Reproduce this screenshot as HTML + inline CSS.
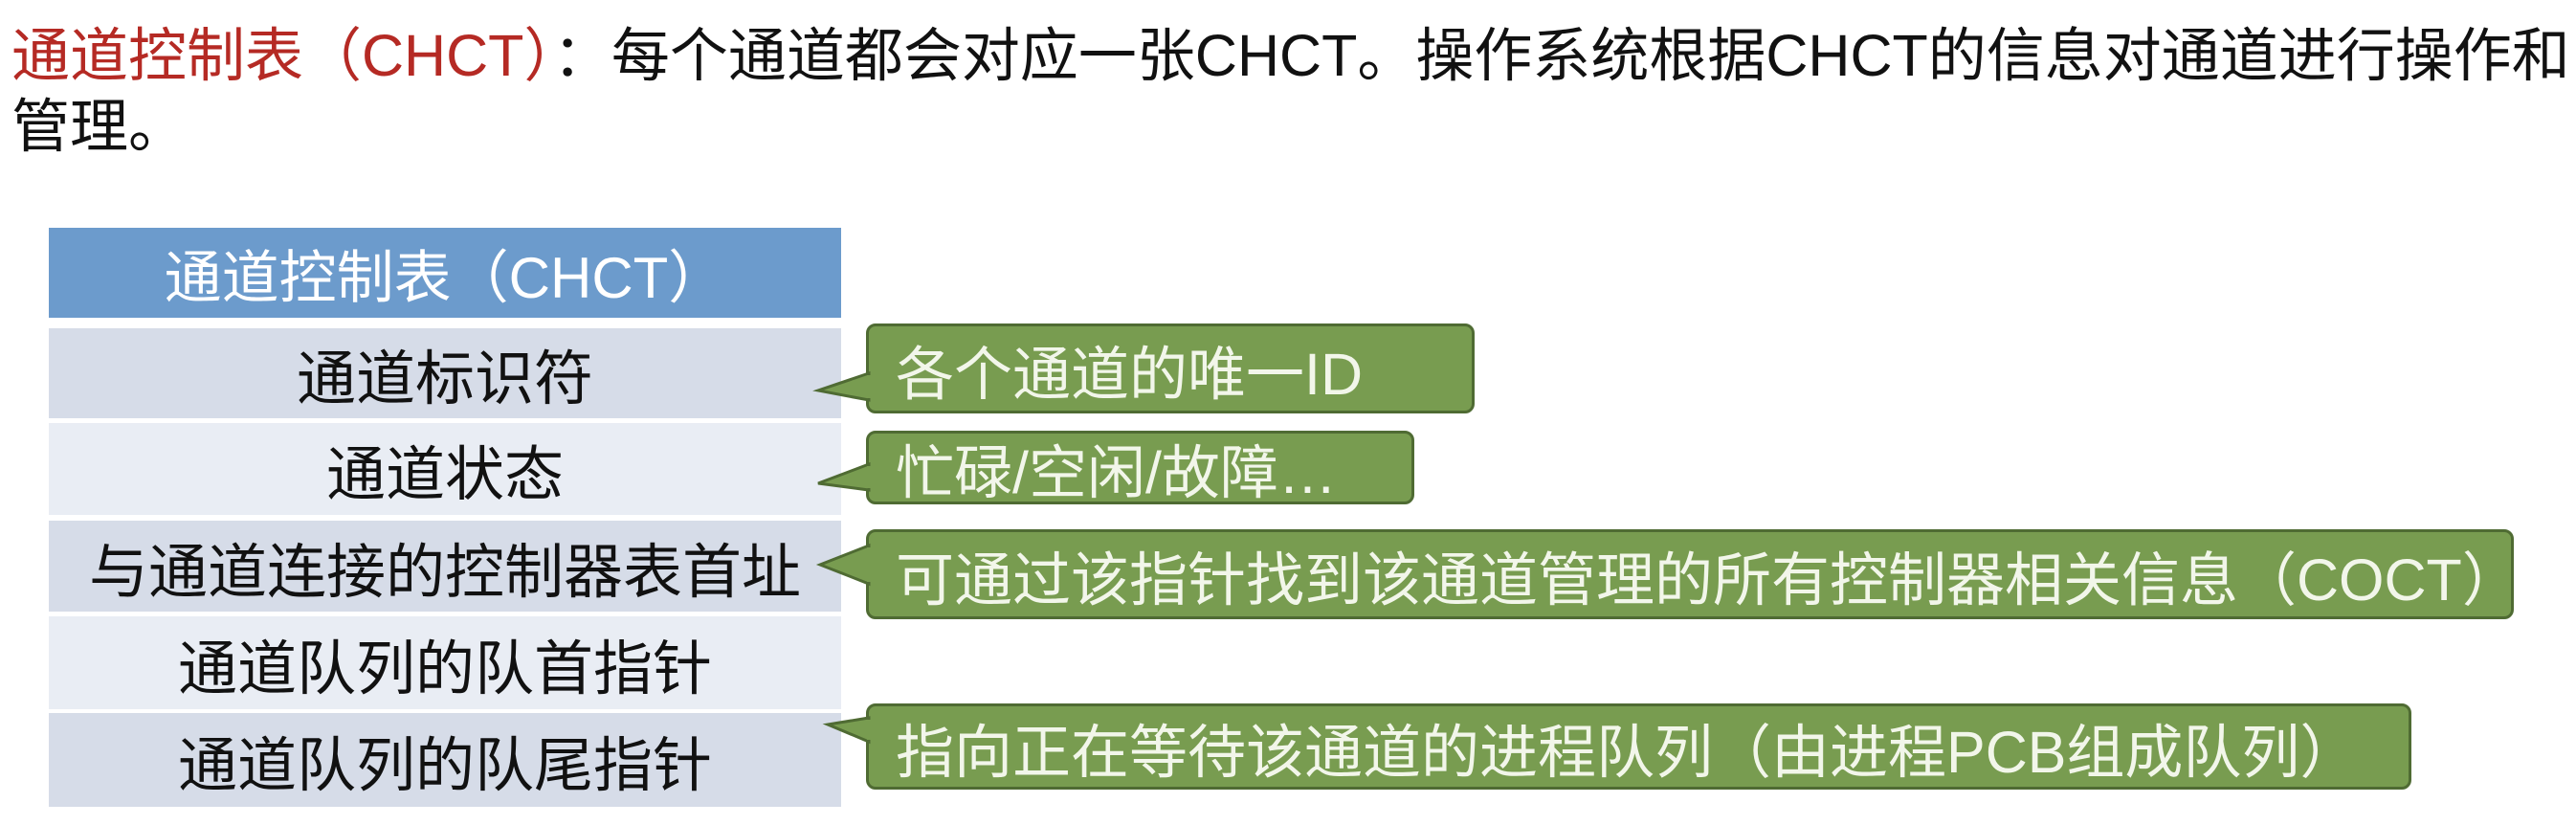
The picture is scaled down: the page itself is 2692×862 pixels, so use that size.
<!DOCTYPE html>
<html><head><meta charset="utf-8"><style>
body{margin:0;width:2692px;height:862px;background:#fff;position:relative;overflow:hidden;font-family:"Liberation Sans","Noto Sans CJK SC",sans-serif;}
.t{position:absolute;white-space:nowrap;}
.row{position:absolute;left:51px;width:828px;display:flex;align-items:center;justify-content:center;font-size:62px;color:#111;}
.c{position:absolute;left:905px;background:#789c50;border:3px solid #4f6b33;border-radius:10px;box-sizing:border-box;color:#f2f6ea;font-size:61px;display:flex;align-items:center;padding-left:28px;white-space:nowrap;}
svg{position:absolute;left:0;top:0;}
</style></head><body>
<div class="t" style="left:12px;top:8px;font-size:61px;color:#111;"><span style="color:#b52a24">通道控制表（CHCT）</span>：每个通道都会对应一张CHCT。操作系统根据CHCT的信息对通道进行操作和</div>
<div class="t" style="left:12px;top:82px;font-size:61px;color:#111;">管理。</div>

<div class="row" style="top:238px;height:94px;background:#6c9bcc;color:#fff;font-size:60px;">通道控制表（CHCT）</div>
<div class="row" style="top:343px;height:94px;background:#d6dce8;">通道标识符</div>
<div class="row" style="top:442px;height:96px;background:#e9edf4;">通道状态</div>
<div class="row" style="top:544px;height:95px;background:#d6dce8;">与通道连接的控制器表首址</div>
<div class="row" style="top:644px;height:97px;background:#e9edf4;">通道队列的队首指针</div>
<div class="row" style="top:745px;height:98px;background:#d6dce8;">通道队列的队尾指针</div>

<div class="c" style="top:338px;width:636px;height:94px;">各个通道的唯一ID</div>
<div class="c" style="top:450px;width:573px;height:77px;">忙碌/空闲/故障…</div>
<div class="c" style="top:553px;width:1722px;height:94px;">可通过该指针找到该通道管理的所有控制器相关信息（COCT）</div>
<div class="c" style="top:735px;width:1615px;height:90px;">指向正在等待该通道的进程队列（由进程PCB组成队列）</div>
<svg width="2692" height="862">
<polygon points="908,390 855,408 908,418" fill="#789c50" stroke="#4f6b33" stroke-width="3"/>
<polygon points="908,485 855,505 908,512" fill="#789c50" stroke="#4f6b33" stroke-width="3"/>
<polygon points="908,570 857,590 908,610" fill="#789c50" stroke="#4f6b33" stroke-width="3"/>
<polygon points="908,750 865,757 908,775" fill="#789c50" stroke="#4f6b33" stroke-width="3"/>
<rect x="906" y="392" width="6" height="24" fill="#789c50"/>
<rect x="906" y="487" width="6" height="23" fill="#789c50"/>
<rect x="906" y="572" width="6" height="36" fill="#789c50"/>
<rect x="906" y="752" width="6" height="21" fill="#789c50"/>
</svg>
</body></html>
